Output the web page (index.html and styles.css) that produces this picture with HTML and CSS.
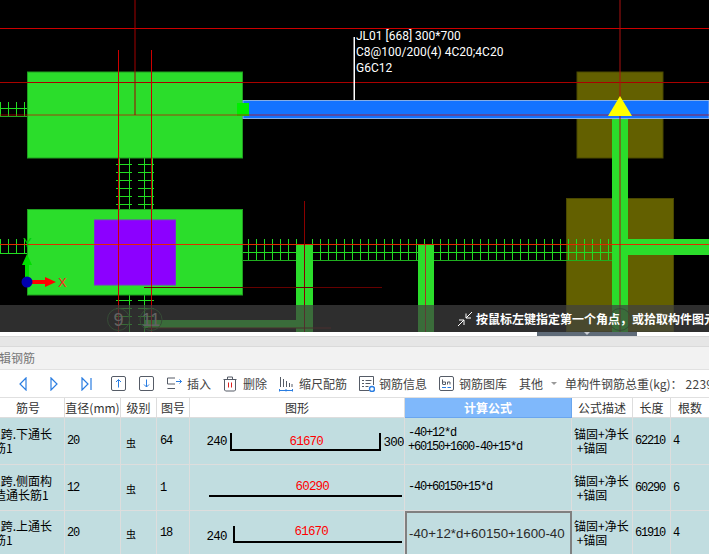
FILE: index.html
```html
<!DOCTYPE html>
<html lang="zh">
<head>
<meta charset="utf-8">
<title>编辑钢筋</title>
<link rel="stylesheet" href="styles.css">
</head>
<body>
<section class="canvas">
  <svg class="drawing" width="709" height="332" viewBox="0 0 709 332">
    <defs>
      <pattern id="ticks" x="0" y="0" width="8" height="8" patternUnits="userSpaceOnUse">
        <rect x="0" y="0" width="1" height="8" fill="#22dd22"/>
      </pattern>
      <pattern id="rungs" x="0" y="4" width="8" height="8" patternUnits="userSpaceOnUse">
        <rect x="0" y="0" width="8" height="1" fill="#22dd22"/>
      </pattern>
    </defs>
    <!-- olive columns -->
    <rect x="577" y="72" width="86" height="86" fill="#636000" stroke="#4a4800"/>
    <rect x="566.500" y="198.500" width="107" height="133" fill="#636000" stroke="#4a4800"/>
    <!-- rebar meshes -->
    <rect x="0" y="102" width="27" height="15" fill="url(#ticks)"/>
    <rect x="0" y="108" width="27" height="1" fill="#22dd22"/>
    <rect x="0" y="116" width="27" height="1" fill="#22aa22"/>
    <rect x="0" y="239" width="27" height="15" fill="url(#ticks)"/>
    <rect x="0" y="253" width="27" height="1" fill="#22dd22"/>
    <rect x="116" y="158" width="16" height="51" fill="url(#rungs)"/>
    <rect x="138" y="158" width="16" height="51" fill="url(#rungs)"/>
    <rect x="129" y="158" width="1" height="51" fill="#22dd22"/>
    <rect x="119" y="158" width="1" height="51" fill="#22dd22"/>
    <rect x="144" y="158" width="1" height="51" fill="#22dd22"/>
    <rect x="152" y="158" width="1" height="51" fill="#22dd22"/>
    <rect x="116" y="295" width="16" height="37" fill="url(#rungs)"/>
    <rect x="138" y="295" width="16" height="37" fill="url(#rungs)"/>
    <rect x="129" y="295" width="1" height="37" fill="#22dd22"/>
    <rect x="144" y="295" width="1" height="37" fill="#22dd22"/>
    <rect x="243" y="239" width="369" height="21" fill="url(#ticks)"/>
    <rect x="243" y="252" width="369" height="1" fill="#22dd22"/>
    <rect x="243" y="260" width="369" height="1" fill="#1fae1f"/>
    <!-- foundations -->
    <rect x="27.500" y="72" width="215" height="86" fill="#2bdd2b" stroke="#1f9f1f"/>
    <rect x="27.500" y="209.500" width="215" height="85.500" fill="#2bdd2b" stroke="#1f9f1f"/>
    <rect x="94.500" y="220" width="81" height="65" fill="#8c00ff" stroke="#7a30d0"/>
    <!-- beams -->
    <rect x="296" y="244" width="17" height="88" fill="#2bdd2b"/>
    <rect x="418" y="244" width="16" height="88" fill="#2bdd2b"/>
    <rect x="612" y="116" width="16" height="216" fill="#2bdd2b"/>
    <rect x="628" y="239" width="81" height="16" fill="#2bdd2b"/>
    <rect x="144" y="320" width="152" height="8" fill="#2bdd2b"/>
    <rect x="243" y="100.500" width="466" height="18" fill="#1473ff" stroke="#86aee6"/>
    <rect x="237" y="103" width="12" height="13" fill="#00ee00"/>
    <!-- axis lines -->
    <g fill="none" stroke-width="1">
      <line x1="0" y1="28.500" x2="709" y2="28.500" stroke="#cc0000"/>
      <line x1="0" y1="82.500" x2="709" y2="82.500" stroke="#aa0000"/>
      <line x1="0" y1="115" x2="709" y2="115" stroke="#cc0000" stroke-opacity=".7"/>
      <line x1="0" y1="244.500" x2="709" y2="244.500" stroke="#e02a00"/>
      <line x1="135" y1="0" x2="135" y2="115" stroke="#a30000"/>
      <line x1="118.500" y1="50" x2="118.500" y2="332" stroke="#cc0000"/>
      <line x1="151.500" y1="50" x2="151.500" y2="332" stroke="#cc0000"/>
      <line x1="304.500" y1="201" x2="304.500" y2="332" stroke="#8a0000"/>
      <line x1="425.500" y1="244" x2="425.500" y2="332" stroke="#aa3322"/>
      <line x1="620" y1="0" x2="620" y2="332" stroke="#aa1010"/>
      <line x1="144" y1="287.500" x2="382" y2="287.500" stroke="#660000"/>
      <line x1="148" y1="328" x2="331" y2="328" stroke="#660000"/>
    </g>
    <!-- leader -->
    <rect x="353.500" y="37" width="1.500" height="63" fill="#ffffff"/>
    <text class="note" x="356" y="39.500">JL01 [668] 300*700</text>
    <text class="note" x="356" y="55.500">C8@100/200(4) 4C20;4C20</text>
    <text class="note" x="356" y="71.500">G6C12</text>
    <!-- insertion marker -->
    <polygon points="620,96 632,116 608,116" fill="#ffff00"/>
    <!-- coordinate axes -->
    <text class="axis-y" x="23" y="247">Y</text>
    <polygon points="25,282 25,265 22,265 27,254 32,265 29,265 29,282" fill="#00dd00"/>
    <polygon points="27,280 45,280 45,277 56,282 45,287 45,284 27,284" fill="#ff0000"/>
    <circle cx="27" cy="282" r="5.500" fill="#0000b0"/>
    <text class="axis-x" x="58" y="287">X</text>
    <!-- grid bubbles -->
    <g fill="none" stroke="#1d6a1d">
      <circle cx="118.500" cy="319.500" r="11"/>
      <circle cx="151" cy="319.500" r="11"/>
      <circle cx="620" cy="319.500" r="11"/>
    </g>
    <text class="bubble" x="118.500" y="326">9</text>
    <text class="bubble" x="151" y="326">11</text>
  </svg>
  <div class="hint">
    <svg class="hint-icon" width="16" height="16" viewBox="0 0 16 16">
      <path d="M15 1 9 7M9 2.500V7H14M1 15l6-6M2 9H7V14" fill="none" stroke="#ffffff" stroke-width="1"/>
    </svg>
    <span class="hint-text">按鼠标左键指定第一个角点，或拾取构件图元</span>
  </div>
</section>
<div class="divider"><span class="handle"><i class="handle-caret"></i></span></div>
<div class="band"></div>
<header class="title"><span class="title-text">编辑钢筋</span></header>
<nav class="toolbar">
  <svg class="nav-a" width="8" height="14" viewBox="0 0 8 14"><path d="M7 1 1 7l6 6Z" fill="none" stroke="#2a7de1" stroke-width="1.200"/></svg>
  <svg class="nav-b" width="8" height="14" viewBox="0 0 8 14"><path d="M1 1l6 6-6 6Z" fill="none" stroke="#2a7de1" stroke-width="1.200"/></svg>
  <svg class="nav-c" width="11" height="14" viewBox="0 0 11 14"><path d="M1 1l6 6-6 6ZM10 1V13" fill="none" stroke="#2a7de1" stroke-width="1.200"/></svg>
  <svg class="nav-d" width="15" height="15" viewBox="0 0 15 15"><rect x=".5" y=".5" width="14" height="14" rx="1.500" fill="none" stroke="#555b66"/><path d="M7.500 11.500V4M5 6l2.500-2.500L10 6" fill="none" stroke="#2a7de1"/></svg>
  <svg class="nav-e" width="15" height="15" viewBox="0 0 15 15"><rect x=".5" y=".5" width="14" height="14" rx="1.500" fill="none" stroke="#555b66"/><path d="M7.500 3.500V11M5 8.500l2.500 2.500L10 8.500" fill="none" stroke="#2a7de1"/></svg>
  <span class="tool t-insert">
    <svg width="15" height="13" viewBox="0 0 15 13"><path d="M8 1H.5V7H8M.5 11.500H8" fill="none" stroke="#555b66"/><path d="M9 4.500h5.500M12.500 2.500l2 2-2 2" fill="none" stroke="#2a7de1"/></svg>
    <span class="tool-label">插入</span>
  </span>
  <span class="tool t-delete">
    <svg width="14" height="16" viewBox="0 0 14 16"><path d="M.5 3.500H13.500M4.500 3.500V1H9.500V3.500M1.500 3.500V14L2.500 15H11.500L12.500 14V3.500" fill="none" stroke="#555b66"/><path d="M5.500 6.500V11.500M8.500 6.500V11.500" fill="none" stroke="#e02020"/></svg>
    <span class="tool-label">删除</span>
  </span>
  <span class="tool t-scale">
    <svg width="14" height="16" viewBox="0 0 14 16"><path d="M1.500 1V11M4.500 3V11M7.500 5V11M10.500 7V11M13 8V11" fill="none" stroke="#555b66"/><path d="M.5 13V15.500M.5 14.500H13.500M13.500 13V15.500M7 13V15.500" fill="none" stroke="#2a7de1"/></svg>
    <span class="tool-label">缩尺配筋</span>
  </span>
  <span class="tool t-info">
    <svg width="16" height="16" viewBox="0 0 16 16"><path d="M10 14.500H.5V.5H14.500V9" fill="none" stroke="#555b66"/><path d="M3 4.500h2M6.500 4.500h6M3 7.500h2M6.500 7.500h5M3 10.500h2M6.500 10.500h3" stroke="#555b66"/><circle cx="13" cy="13" r="2.500" fill="none" stroke="#2a7de1" stroke-width="1.400"/></svg>
    <span class="tool-label">钢筋信息</span>
  </span>
  <span class="tool t-lib">
    <svg width="15" height="15" viewBox="0 0 15 15"><rect x=".5" y=".5" width="14" height="14" rx="1.500" fill="none" stroke="#555b66"/><path d="M3.500 3.500V8.500M3.500 6H6.500V8.500H4M8.500 8.500V6H11V8.500" fill="none" stroke="#555b66"/><path d="M3 11.500H7M8.500 11.500H12" stroke="#2a7de1"/></svg>
    <span class="tool-label">钢筋图库</span>
  </span>
  <span class="t-other">其他</span>
  <i class="caret"></i>
  <span class="t-total">单构件钢筋总重(kg)：<span class="total-value">2239</span></span>
</nav>
<main class="grid">
  <div class="head head-first">筋号</div>
  <div class="head">直径(mm)</div>
  <div class="head">级别</div>
  <div class="head">图号</div>
  <div class="head">图形</div>
  <div class="head head-active">计算公式</div>
  <div class="head">公式描述</div>
  <div class="head">长度</div>
  <div class="head head-last">根数</div>

  <div class="cell cell-name"><span class="name-text">1跨.下通长<br>筋1</span></div>
  <div class="cell mono">20</div>
  <div class="cell grade">虫</div>
  <div class="cell mono num-fig">64</div>
  <div class="cell cell-shape">
    <svg width="214" height="45" viewBox="0 0 214 45">
      <text class="dim" x="16.500" y="27">240</text>
      <path d="M41 15V32H190V15" fill="none" stroke="#000" stroke-width="2"/>
      <text class="dim dim-red" x="99.500" y="27">61670</text>
      <text class="dim" x="193.500" y="28">300</text>
    </svg>
  </div>
  <div class="cell mono formula"><span>-40+12*d<br>+60150+1600-40+15*d</span></div>
  <div class="cell desc"><span>锚固+净长<br>&nbsp;+锚固</span></div>
  <div class="cell mono">62210</div>
  <div class="cell mono cell-last">4</div>

  <div class="cell cell-name"><span class="name-text">1跨.侧面构<br>造通长筋1</span></div>
  <div class="cell mono">12</div>
  <div class="cell grade">虫</div>
  <div class="cell mono num-fig">1</div>
  <div class="cell cell-shape">
    <svg width="214" height="45" viewBox="0 0 214 45">
      <path d="M19 31H212" fill="none" stroke="#000" stroke-width="2"/>
      <text class="dim dim-red" x="105.500" y="24.500">60290</text>
    </svg>
  </div>
  <div class="cell mono formula"><span>-40+60150+15*d</span></div>
  <div class="cell desc"><span>锚固+净长<br>&nbsp;+锚固</span></div>
  <div class="cell mono">60290</div>
  <div class="cell mono cell-last">6</div>

  <div class="cell cell-name"><span class="name-text">1跨.上通长<br>筋1</span></div>
  <div class="cell mono">20</div>
  <div class="cell grade">虫</div>
  <div class="cell mono num-fig">18</div>
  <div class="cell cell-shape">
    <svg width="214" height="45" viewBox="0 0 214 45">
      <text class="dim" x="16.500" y="29">240</text>
      <path d="M44 15V31H212" fill="none" stroke="#000" stroke-width="2"/>
      <text class="dim dim-red" x="104.500" y="24">61670</text>
    </svg>
  </div>
  <div class="cell cell-edit">-40+12*d+60150+1600-40</div>
  <div class="cell desc"><span>锚固+净长<br>&nbsp;+锚固</span></div>
  <div class="cell mono">61910</div>
  <div class="cell mono cell-last">4</div>
</main>
</body>
</html>
```
FILE: styles.css
```css
* { box-sizing: border-box; }
html, body { margin: 0; padding: 0; }
body {
  width: 709px;
  height: 554px;
  overflow: hidden;
  background: #fff;
  font-family: "Noto Sans CJK SC", "Liberation Sans", sans-serif;
  font-size: 12px;
  color: #333;
}

/* drawing */
.canvas { position: relative; height: 332px; background: #000; overflow: hidden; }
.drawing { display: block; }
.note { font-family: Roboto, "Liberation Sans", sans-serif; font-size: 12px; fill: #fff; }
.axis-x { font-family: "Liberation Sans", sans-serif; font-size: 13px; fill: #ff2020; }
.axis-y { font-family: "Liberation Sans", sans-serif; font-size: 13px; fill: #00cc00; }
.bubble { font-family: "Liberation Sans", sans-serif; font-size: 18px; fill: #bbbbbb; text-anchor: middle; }
.hint {
  position: absolute;
  left: 0; right: 0; bottom: 0;
  height: 27px;
  background: rgba(64, 64, 64, .72);
  display: flex;
  align-items: center;
  padding-left: 457px;
  white-space: nowrap;
  overflow: hidden;
}
.hint-icon { flex: none; }
.hint-text { margin-left: 3px; color: #fff; font-weight: 700; font-size: 12px; }

/* strips */
.divider { position: relative; height: 4px; background: #fff; }
.handle { position: absolute; left: 537px; top: 0; width: 100px; height: 4px; background: #5f6b78; }
.handle-caret {
  position: absolute; left: 47px; top: 0;
  border: 3px solid transparent; border-top-color: #c8ccd2; border-bottom: 0;
}
.band { height: 11px; background: #e6e6e6; border-top: 1px solid #d8d8d8; border-bottom: 1px solid #dadada; }
.title { height: 23px; background: #f2f2f2; border-bottom: 1px solid #e2e2e2; overflow: hidden; }
.title-text { display: block; margin-left: -13px; font-size: 12px; line-height: 22px; color: #777; }

/* toolbar */
.toolbar {
  display: flex;
  align-items: center;
  height: 27px;
  background: #fff;
  white-space: nowrap;
  overflow: hidden;
  color: #444;
}
.toolbar svg { flex: none; display: block; }
.nav-a { margin-left: 19px; }
.nav-b { margin-left: 23px; }
.nav-c { margin-left: 23px; }
.nav-d { margin-left: 19px; }
.nav-e { margin-left: 13px; }
.tool { display: flex; align-items: center; flex: none; }
.tool-label { margin-left: 5px; }
.t-insert { margin-left: 13px; }
.t-delete { margin-left: 12px; }
.t-delete .tool-label { margin-left: 6px; }
.t-scale { margin-left: 12px; }
.t-scale .tool-label { margin-left: 6px; }
.t-info { margin-left: 12px; }
.t-info .tool-label { margin-left: 4px; }
.t-lib { margin-left: 12px; }
.t-other { margin-left: 12px; }
.caret { margin-left: 8px; border: 3px solid transparent; border-top-color: #999; border-bottom: 0; }
.t-total { margin-left: 8px; }
.total-value { margin-left: 3px; letter-spacing: .3px; }

/* table */
.grid {
  display: grid;
  grid-template-columns: 65px 56px 36px 33px 215px 167px 61px 38px 38px;
  grid-template-rows: 20px 47px 46px 44px;
  border-top: 1px solid #e0e0e0;
}
.head {
  display: flex;
  align-items: center;
  justify-content: center;
  background: #fff;
  border-right: 1px solid #dddddd;
  border-bottom: 1px solid #dddddd;
  white-space: nowrap;
  color: #333;
}
.head-first { padding-right: 8px; }
.head-active { background: #7fb8fb; color: #fff; font-weight: 700; border-right-color: #6aa6ee; border-bottom-color: #6aa6ee; }
.head-last { border-right: 0; }
.cell {
  background: #c1dde0;
  border-right: 1px solid #dddddd;
  border-bottom: 1px solid #dddddd;
  color: #000;
  display: flex;
  align-items: center;
  padding-left: 2px;
  font-size: 12px;
  line-height: 14px;
  overflow: hidden;
}
.cell-last { border-right: 0; }
.mono {
  font-family: "Liberation Mono", monospace;
  font-size: 12px;
  letter-spacing: -1.2px;
}
.num-fig { padding-left: 3px; }
.formula { padding-left: 3px; padding-bottom: 2px; line-height: 14px; }
.cell-name { padding-left: 0; }
.name-text { display: block; margin-left: -6px; white-space: nowrap; }
.grade { font-size: 10px; padding-left: 5px; padding-top: 3px; }
.cell-shape { padding-left: 0; align-items: flex-start; }
.cell-shape svg { display: block; flex: none; }
.dim { font-family: "Liberation Mono", monospace; font-size: 12.500px; letter-spacing: -.8px; fill: #000; }
.dim-red { fill: #ff0000; }
.desc { white-space: nowrap; }
.cell-edit {
  border: 2px solid #808080;
  border-bottom: 0;
  padding-left: 2px;
  font-family: "Liberation Sans", sans-serif;
  font-size: 13.300px;
  color: #2a2a2a;
  white-space: nowrap;
}
```
